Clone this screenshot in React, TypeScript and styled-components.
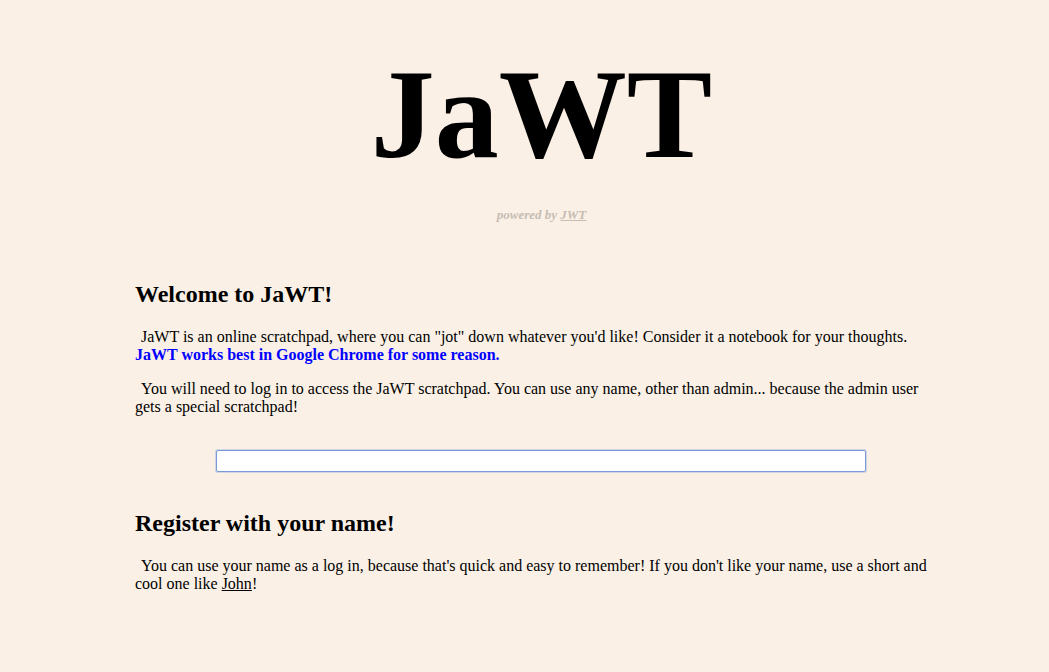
import React from "react";
import styled, { createGlobalStyle } from "styled-components";

const Global = createGlobalStyle`
  html, body {
    margin: 0;
    padding: 0;
    background: #faf0e6;
  }
  body {
    font-family: "Liberation Serif", "Times New Roman", serif;
    font-size: 16px;
    color: #000;
  }
`;

const Page = styled.div`
  display: flex;
  flex-direction: column;
  padding-top: 39px;
`;

const Header = styled.header`
  display: flex;
  flex-direction: column;
  align-items: center;
  margin-left: 34px;
`;

const Title = styled.h1`
  margin: 0;
  font-family: "Liberation Serif", "Times New Roman", serif;
  font-weight: bold;
  font-size: 128px;
  line-height: 150px;
`;

const Powered = styled.p`
  margin: 18px 0 0;
  font-size: 13px;
  font-style: italic;
  font-weight: bold;
  color: #c7bdb3;
  a {
    color: inherit;
  }
`;

const Main = styled.main`
  width: 812px;
  margin: 58px 0 0 135px;
`;

const Heading = styled.h2`
  margin: 0 0 20px;
  font-size: 24px;
  font-weight: bold;
`;

const Para = styled.p`
  margin: 0 0 16px;
  line-height: 18px;
  text-indent: 6px;
`;

const Notice = styled.strong`
  color: #0000ff;
`;

const Form = styled.form`
  display: flex;
  justify-content: center;
  margin: 34px 0 38px;
`;

const NameInput = styled.input`
  width: 650px;
  height: 22px;
  box-sizing: border-box;
  background: #fff;
  border: 1px solid #7b9bd8;
  border-radius: 2px;
  box-shadow: 0 0 0 1px rgba(130, 160, 220, 0.35);
  outline: none;
`;

const Link = styled.a`
  color: inherit;
  text-decoration: underline;
`;

export default function App() {
  return (
    <>
      <Global />
      <Page>
        <Header>
          <Title>JaWT</Title>
          <Powered>
            powered by <a href="#">JWT</a>
          </Powered>
        </Header>
        <Main>
          <Heading>Welcome to JaWT!</Heading>
          <Para>
            JaWT is an online scratchpad, where you can "jot" down whatever you'd like! Consider it a
            notebook for your thoughts. <Notice>JaWT works best in Google Chrome for some reason.</Notice>
          </Para>
          <Para>
            You will need to log in to access the JaWT scratchpad. You can use any name, other than
            admin... because the admin user gets a special scratchpad!
          </Para>
          <Form onSubmit={(e) => e.preventDefault()}>
            <NameInput type="text" />
          </Form>
          <Heading>Register with your name!</Heading>
          <Para>
            You can use your name as a log in, because that's quick and easy to remember! If you don't
            like your name, use a short and cool one like <Link href="#">John</Link>!
          </Para>
        </Main>
      </Page>
    </>
  );
}
